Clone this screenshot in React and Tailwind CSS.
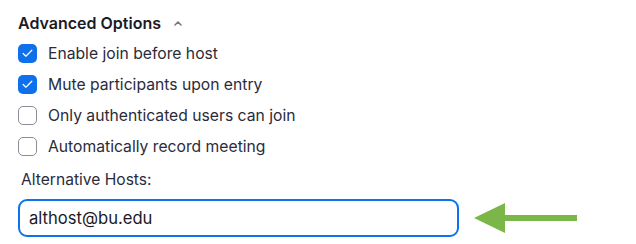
import { Check } from 'lucide-react';

// ── Advanced Options panel ────────────────────────────────────

const OPTIONS = [
  { label: 'Enable join before host', checked: true },
  { label: 'Mute participants upon entry', checked: true },
  { label: 'Only authenticated users can join', checked: false },
  { label: 'Automatically record meeting', checked: false },
];

function Box({ checked }) {
  if (checked) {
    return (
      <span className="flex h-[19px] w-[19px] items-center justify-center rounded-[5px] bg-[#0e71eb]">
        <Check size={13} strokeWidth={2.2} className="text-white" />
      </span>
    );
  }
  return <span className="h-[19px] w-[19px] rounded-[5px] border border-[#8c8c96] bg-white" />;
}

export default function App() {
  return (
    <div
      className="h-[244px] w-[636px] bg-white text-[#232333]"
      style={{ fontFamily: 'Inter, "Noto Sans", sans-serif' }}
    >
      <div className="px-[18px] pt-[12px]">
        {/* Header */}
        <div className="flex items-center gap-[12px]">
          <span className="text-[16px] font-semibold leading-[22px] text-[#1a1a28]">Advanced Options</span>
          <svg width="10" height="7" viewBox="0 0 10 7" className="mt-[1px]">
            <path d="M2 5 L5 2 L8 5" fill="none" stroke="#6e7680" strokeWidth="1.5" strokeLinecap="round" strokeLinejoin="round" />
          </svg>
        </div>

        {/* Checkbox rows */}
        <div className="mt-[10px] flex flex-col gap-[12px]">
          {OPTIONS.map((o) => (
            <div key={o.label} className="flex h-[19px] items-center gap-[11px]">
              <Box checked={o.checked} />
              <span className="text-[15.7px] leading-[19px] text-[#2b2b3a]">{o.label}</span>
            </div>
          ))}
        </div>

        {/* Alternative hosts */}
        <div className="mt-[14px] pl-[3px] text-[15.6px] leading-[19px] text-[#2b2b3a]">Alternative Hosts:</div>
        <div className="mt-[10px] flex items-center">
          <div className="flex h-[38px] w-[441px] items-center rounded-[9px] border-2 border-[#0e72ed] px-[9px] text-[16.6px] text-[#1a1a28]">
            althost@bu.edu
          </div>
          <svg width="104" height="32" viewBox="0 0 104 32" className="ml-[15px]">
            <polygon points="0,16 31,1 31,31" fill="#7ab648" />
            <rect x="30" y="13" width="73" height="6" fill="#7ab648" />
          </svg>
        </div>
      </div>
    </div>
  );
}
